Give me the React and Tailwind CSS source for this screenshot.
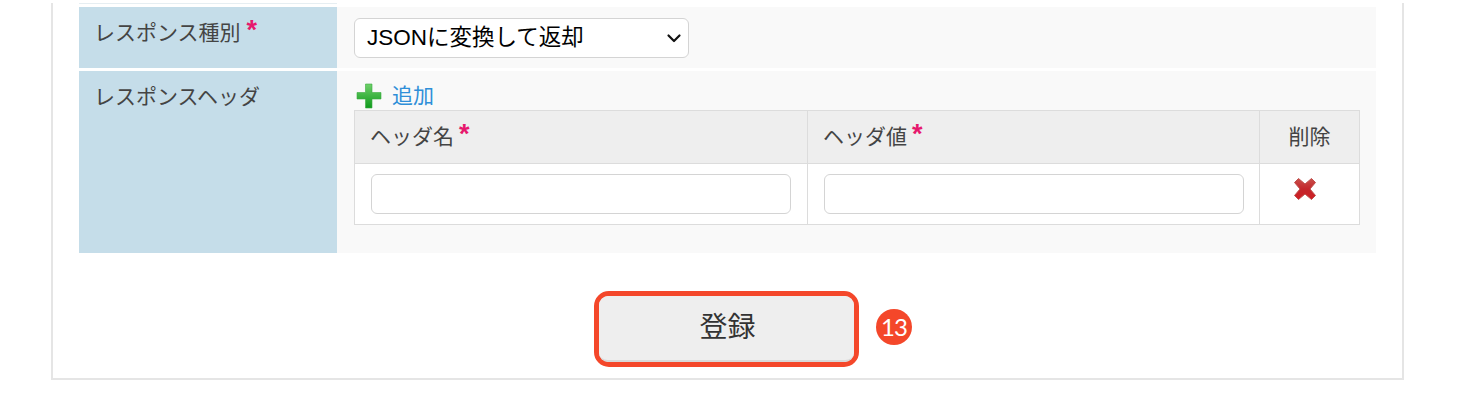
import { Fragment } from 'react';

const jp = "font-['Liberation_Sans','Noto_Sans_CJK_JP',sans-serif]";

function Star({ className = '' }) {
    return <span className={`inline-block text-[#e6186d] font-bold text-[27px] leading-none ${className}`}>*</span>;
}

function PlusIcon() {
    return (
        <svg width="26" height="26" viewBox="0 0 26 26">
            <defs>
                <linearGradient id="plusGreen" x1="0" y1="0" x2="0" y2="1">
                    <stop offset="0" stopColor="#6fd06a" />
                    <stop offset="1" stopColor="#0f9a1c" />
                </linearGradient>
            </defs>
            <path d="M9.500 1h6.500v8.500h9v6.500h-9v9H9.500v-9H1V9.500h8.500z" fill="url(#plusGreen)" stroke="#3aad3f" strokeWidth="0.6" strokeLinejoin="round" />
        </svg>
    );
}

function CrossIcon() {
    return (
        <svg width="26" height="26" viewBox="0 0 26 26">
            <defs>
                <linearGradient id="crossRed" x1="0" y1="0" x2="0" y2="1">
                    <stop offset="0" stopColor="#c9504c" />
                    <stop offset="0.5" stopColor="#c4262b" />
                    <stop offset="1" stopColor="#cf1f24" />
                </linearGradient>
            </defs>
            <path d="M6.500 2.500 13 8l6.500-5.500 4 4L18 13l5.500 6.500-4 4L13 18l-6.500 5.500-4-4L8 13 2.500 6.500z" fill="url(#crossRed)" stroke="#c0504d" strokeWidth="1" strokeLinejoin="round" />
        </svg>
    );
}

export default function App() {
    return (
        <div className={`w-[1459px] h-[402px] bg-white overflow-hidden ${jp}`}>
            <div className="ml-[51px] w-[1353px] h-[377px] border-x-2 border-b-2 border-[#e5e5e5] bg-white px-[26px]">
                <div className="w-[258px] h-px mt-[3px] bg-[#e6eef2]" />
                <div className="flex h-[61px] mt-[3px] bg-[#f9f9f9]">
                    <div className="w-[258px] shrink-0 bg-[#c5dde9] pl-[16px] pt-[11px] text-[21px] leading-[30px] text-[#444]">
                        <span className="-ml-[1px]">レスポンス種別</span><Star className="ml-[6px] -translate-y-[1px]" />
                    </div>
                    <div className="pl-[17px] pt-[11px]">
                        <div className="w-[335px] h-[40px] bg-white border border-[#d4d4d4] rounded-[6px] flex items-center justify-between pl-[12px] pr-[5px] text-[22.500px] text-black">
                            <span>JSONに変換して返却</span>
                            <svg width="18" height="18" viewBox="0 0 18 18" fill="none" stroke="#111" strokeWidth="2.200" strokeLinecap="round" strokeLinejoin="round">
                                <path d="M3.500 6.500 9 12l5.500-5.500" />
                            </svg>
                        </div>
                    </div>
                </div>
                <div className="flex h-[182px] mt-[3px] bg-[#f9f9f9]">
                    <div className="w-[258px] shrink-0 bg-[#c5dde9] pl-[15px] pt-[11px] text-[21px] leading-[30px] text-[#444]">
                        レスポンスヘッダ
                    </div>
                    <div className="pl-[18px] w-[1039px]">
                        <div className="flex items-center h-[39px] pt-[10px] pl-[1px]">
                            <PlusIcon />
                            <span className="ml-[10px] text-[21px] text-[#2f8fd8]">追加</span>
                        </div>
                        <div className="-ml-[1px] w-[1006px] border-t border-l border-[#dcdcdc] text-[21px] text-[#444]">
                            <div className="grid grid-cols-[453px_452px_100px] h-[53px] bg-[#eeeeee]">
                                {['ヘッダ名', 'ヘッダ値'].map((name) => (
                                    <div key={name} className="border-r border-b border-[#dcdcdc] pl-[15px] pt-[11px] leading-[30px]">
                                        {name}<Star className="ml-[5px] -translate-y-[1px]" />
                                    </div>
                                ))}
                                <div className="border-r border-b border-[#dcdcdc] flex items-center justify-center">削除</div>
                            </div>
                            <div className="grid grid-cols-[453px_452px_100px] h-[61px] bg-white">
                                {[0, 1].map((i) => (
                                    <Fragment key={i}>
                                        <div className="border-r border-b border-[#dcdcdc] pl-[16px] pt-[10px]">
                                            <input className="block w-[420px] h-[40px] bg-white border border-[#d4d4d4] rounded-[6px]" />
                                        </div>
                                    </Fragment>
                                ))}
                                <div className="border-r border-b border-[#dcdcdc] flex justify-center pt-[12px] pr-[9px]">
                                    <CrossIcon />
                                </div>
                            </div>
                        </div>
                    </div>
                </div>
                <div className="flex items-center mt-[38px] pl-[515px]">
                    <div className="w-[265px] h-[76px] border-[5px] border-[#f4472a] rounded-[15px] bg-white">
                        <button className="w-full h-full rounded-[9px] bg-[#eeeeee] border-b-2 border-[#d8d8d8] text-[28px] text-[#333] pl-[2px]">
                            登録
                        </button>
                    </div>
                    <div className="ml-[17px] mb-[4px] w-[36px] h-[36px] rounded-full bg-[#f4472a] text-white text-[24px] tracking-[-1px] font-['Lato',sans-serif] flex items-center justify-center">
                        13
                    </div>
                </div>
            </div>
        </div>
    );
}
